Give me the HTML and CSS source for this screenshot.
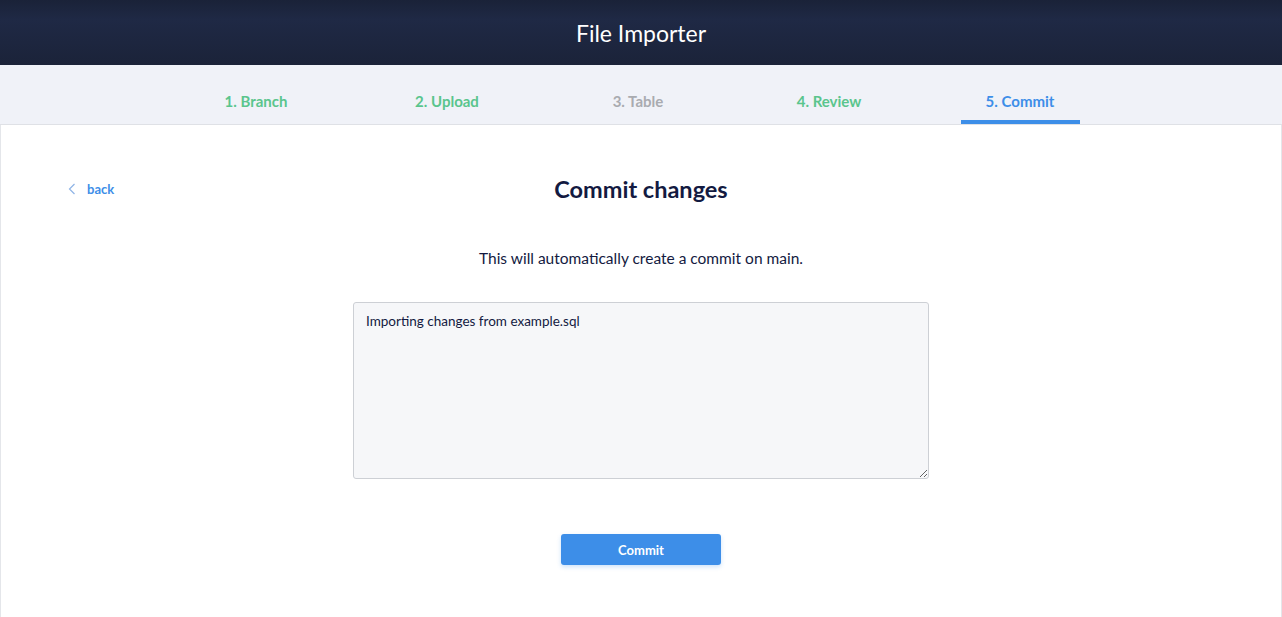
FILE: index.html
```html
<!DOCTYPE html>
<html lang="en">
<head>
    <meta charset="UTF-8">
    <meta name="viewport" content="width=device-width, initial-scale=1.0">
    <title>File Importer</title>
    <link rel="stylesheet" href="styles.css">
</head>
<body>
    <header class="topbar">
        <h1>File Importer</h1>
    </header>
    <nav class="steps">
        <a class="step done" href="#">1. Branch</a>
        <a class="step done" href="#">2. Upload</a>
        <a class="step skipped" href="#">3. Table</a>
        <a class="step done" href="#">4. Review</a>
        <a class="step active" href="#">5. Commit</a>
    </nav>
    <main class="card">
        <div class="card-head">
            <a class="back" href="#">
                <svg width="8" height="12" viewBox="0 0 8 12"><path d="M6.5 1 L1.5 6 L6.5 11" fill="none" stroke="#8fb4e6" stroke-width="1.2"/></svg>
                <span>back</span>
            </a>
            <h2>Commit changes</h2>
        </div>
        <p class="note">This will automatically create a commit on main.</p>
        <textarea class="message" rows="8">Importing changes from example.sql</textarea>
        <button type="button" class="commit-btn">Commit</button>
    </main>
</body>
</html>
```

FILE: styles.css
```css
body {
    margin: 0;
    font-family: Lato, "Open Sans", sans-serif;
    background-color: #fff;
    color: #131a41;
    height: 617px;
    display: flex;
    flex-direction: column;
}

.topbar {
    height: 65px;
    background: linear-gradient(#1a2238, #1f2945 30%, #1b2339);
    display: flex;
    align-items: center;
    justify-content: center;
}

.topbar h1 {
    margin: 0;
    color: #fff;
    font-size: 23px;
    font-weight: 400;
}

.steps {
    height: 60px;
    box-sizing: border-box;
    background-color: #f0f2f8;
    border-bottom: 1px solid #dfe1e6;
    display: flex;
    justify-content: center;
    align-items: stretch;
    gap: 72px;
    padding-right: 6px;
}

.step {
    width: 119px;
    display: flex;
    align-items: center;
    justify-content: center;
    padding-top: 16px;
    box-sizing: border-box;
    font-size: 15px;
    font-weight: 700;
    text-decoration: none;
    border-bottom: 4px solid transparent;
}

.step.done {
    color: #5ac58d;
}

.step.skipped {
    color: #a9abb0;
}

.step.active {
    color: #3d8ee8;
    border-bottom-color: #3d8ee8;
}

.card {
    flex: 1;
    border-left: 1px solid #e4e6ea;
    border-right: 1px solid #e4e6ea;
    display: flex;
    flex-direction: column;
    align-items: center;
}

.card-head {
    width: 100%;
    display: flex;
    align-items: center;
    justify-content: center;
    position: relative;
    margin-top: 50px;
}

.back {
    position: absolute;
    left: 67px;
    top: 6px;
    display: flex;
    align-items: center;
    gap: 11px;
    color: #3d8ee8;
    font-size: 13px;
    font-weight: 700;
    text-decoration: none;
}

.card-head h2 {
    margin: 0;
    font-size: 23.5px;
    font-weight: 700;
}

.note {
    margin: 46px 0 0;
    font-size: 15.5px;
}

.message {
    margin-top: 35px;
    width: 576px;
    height: 177px;
    box-sizing: border-box;
    padding: 10px 12px;
    background-color: #f6f7f9;
    border: 1px solid #cdd0d5;
    border-radius: 3px;
    font-family: inherit;
    font-size: 13.5px;
    color: #131a41;
    resize: vertical;
}

.commit-btn {
    margin-top: 55px;
    width: 160px;
    height: 31px;
    background-color: #3d8ee8;
    color: #fff;
    border: none;
    border-radius: 3px;
    box-shadow: 0 2px 4px rgba(61, 142, 232, 0.25);
    font-family: inherit;
    font-size: 13px;
    font-weight: 700;
    cursor: pointer;
}
```
